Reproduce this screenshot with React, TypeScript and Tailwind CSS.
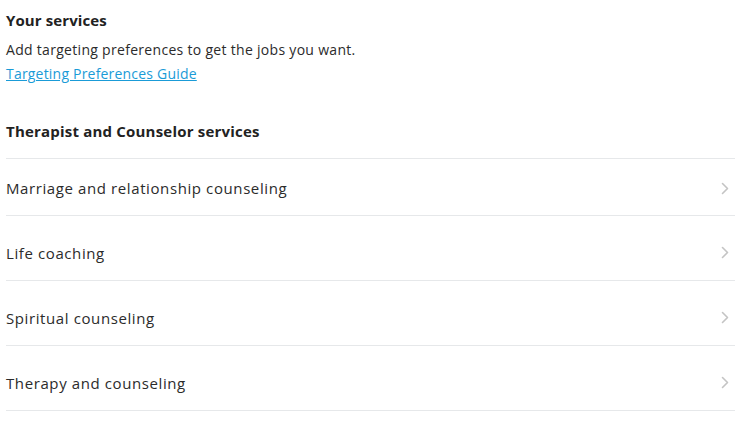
import React from 'react';

const services = [
  'Marriage and relationship counseling',
  'Life coaching',
  'Spiritual counseling',
  'Therapy and counseling',
];

const Chevron = () => (
  <svg width="8" height="13" viewBox="0 0 8 13" fill="none" stroke="#c4c4c4" strokeWidth="1.6" strokeLinecap="round" strokeLinejoin="round">
    <polyline points="1.5 1.5 6.5 6.5 1.5 11.5" />
  </svg>
);

export default function App() {
  return (
    <div className="w-[753px] h-[435px] bg-white text-[#2b2b2b] pl-[6px] pr-[18px] pt-[10px]" style={{ fontFamily: '"Open Sans", Lato, sans-serif' }}>
      <h2 className="text-[15px] font-bold leading-[20px] tracking-[0.1px] text-[#222]">Your services</h2>
      <p className="mt-[9px] text-[14px] leading-[22px] tracking-[0.3px]">Add targeting preferences to get the jobs you want.</p>
      <a href="#" className="text-[14px] leading-[22px] tracking-[0.2px] text-[#1a9bd7] underline">Targeting Preferences Guide</a>
      <h3 className="mt-[36px] text-[15px] font-bold leading-[20px] tracking-[0.2px] text-[#222]">Therapist and Counselor services</h3>
      <ul className="mt-[17px] border-t border-[#e6e8ea]">
        {services.map((s, i) => (
          <li key={s} className={`flex items-center justify-between border-b border-[#e6e8ea] ${i === 0 ? 'h-[57px] pt-[2px]' : 'h-[65px] pt-[9px]'}`}>
            <span className="text-[15px] leading-[20px] tracking-[0.6px]">{s}</span>
            <span className="pr-[6px]"><Chevron /></span>
          </li>
        ))}
      </ul>
    </div>
  );
}
